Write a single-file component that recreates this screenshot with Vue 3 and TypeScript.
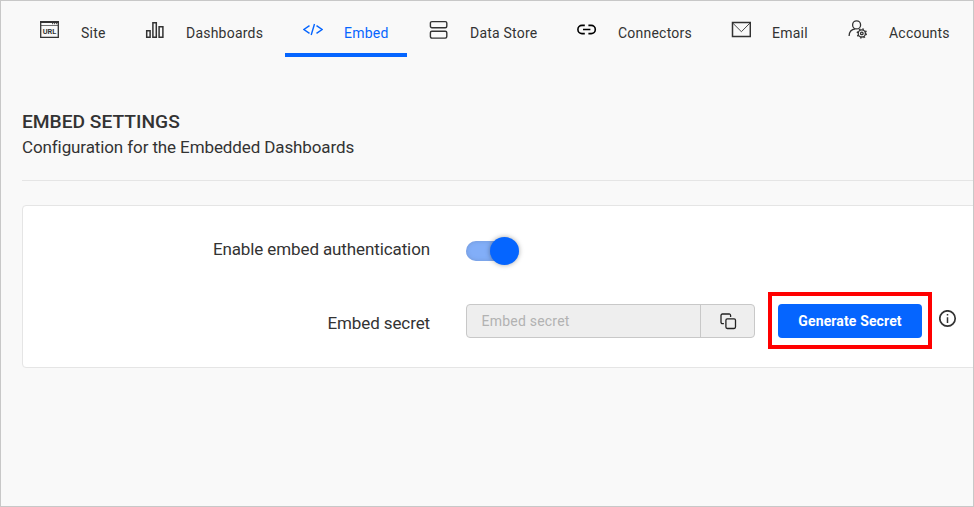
<script setup lang="ts">
import { ref } from 'vue'

interface Tab {
  id: string
  label: string
}

const tabs: Tab[] = [
  { id: 'site', label: 'Site' },
  { id: 'dashboards', label: 'Dashboards' },
  { id: 'embed', label: 'Embed' },
  { id: 'store', label: 'Data Store' },
  { id: 'connectors', label: 'Connectors' },
  { id: 'email', label: 'Email' },
  { id: 'accounts', label: 'Accounts' },
]

const active = ref<string>('embed')
const enabled = ref<boolean>(true)
</script>

<template>
  <div class="page">
    <nav class="tabs">
      <a
        v-for="tab in tabs"
        :key="tab.id"
        class="tab"
        :class="{ active: tab.id === active }"
        @click="active = tab.id"
      >
        <svg class="icon" viewBox="0 0 20 20" fill="none" stroke="currentColor">
          <g v-if="tab.id === 'site'">
            <path d="M.7 2v15.4h17.6V2" stroke-width="1.3" />
            <path d="M0 2h19" stroke-width="2" />
            <path d="M1 5.5h17" stroke-width=".7" />
            <path d="M12 3.7h1.2m.8 0h1.2m.8 0h1.2" stroke-width="1" />
            <text x="9.5" y="14" class="url">URL</text>
          </g>
          <g v-else-if="tab.id === 'dashboards'" stroke-width="1.5">
            <path d="M1.7 10.7h3.4v6.6H1.7zM7.9 2.7h3.4v14.6H7.9zM14.1 6.7h3.8v10.6h-3.8z" />
          </g>
          <g v-else-if="tab.id === 'embed'" stroke-width="1.4">
            <path d="M6.5 5.7.9 9.5l5.6 3.8M13.5 5.7l5.6 3.8-5.6 3.8M11.5 4 8.2 15" />
          </g>
          <g v-else-if="tab.id === 'store'" stroke-width="1.4">
            <rect x="1.4" y="1.6" width="16.4" height="6.2" rx="1.5" />
            <rect x="1.4" y="11.3" width="16.4" height="6.8" rx="1.5" />
          </g>
          <g v-else-if="tab.id === 'connectors'" class="link" stroke-width="1.6">
            <path d="M7.8 5.4H5a4.1 4.1 0 0 0 0 8.2h2.8M11.4 5.4h2.8a4.1 4.1 0 0 1 0 8.2h-2.8M6 9.5h7.4" />
          </g>
          <g v-else-if="tab.id === 'email'">
            <path d="M1.5 2.6h17.8v13.8H1.5z" stroke-width="1.5" />
            <path d="m1.7 3 8.7 8.7L19 3" stroke-width=".9" />
          </g>
          <g v-else>
            <circle cx="8.6" cy="4.9" r="4" stroke-width="1.3" />
            <path d="M1.1 15.9c.1-3.8 2.3-6.5 6.2-7" stroke-width="1.3" />
            <circle cx="13.8" cy="13.4" r="3.6" stroke-width="1.3" />
            <circle cx="13.8" cy="13.4" r="1.3" stroke-width="1.3" />
            <circle cx="13.8" cy="13.4" r="4.5" stroke-width="1.4" stroke-dasharray="1.6 1.934" />
          </g>
        </svg>
        <span>{{ tab.label }}</span>
      </a>
    </nav>

    <header class="heading">
      <h1>EMBED SETTINGS</h1>
      <p>Configuration for the Embedded Dashboards</p>
    </header>

    <section class="card">
      <div class="row">
        <label class="enable-label">Enable embed authentication</label>
        <button class="toggle" :class="{ on: enabled }" aria-label="Enable embed authentication" @click="enabled = !enabled">
          <span class="knob"></span>
        </button>
      </div>
      <div class="row secret">
        <label class="secret-label">Embed secret</label>
        <div class="group">
          <input type="text" placeholder="Embed secret" disabled />
          <button class="copy" aria-label="Copy">
            <svg viewBox="0 0 18 18" fill="none" stroke="currentColor" stroke-width="1.3">
              <rect x="6.9" y="6.9" width="9.6" height="9.6" rx="1.4" />
              <path d="M4.9 11.6H3.4A1.4 1.4 0 0 1 2 10.2V3.4A1.4 1.4 0 0 1 3.4 2h6.8a1.4 1.4 0 0 1 1.4 1.4v1.5" />
            </svg>
          </button>
        </div>
        <div class="highlight">
          <button class="generate">Generate Secret</button>
        </div>
        <svg class="info" viewBox="0 0 18 18" fill="none" stroke="currentColor">
          <circle cx="8.5" cy="8.5" r="7.7" stroke-width="1.7" />
          <path d="M8.5 7.2v5.8M8.5 4v1.6" stroke-width="1.5" />
        </svg>
      </div>
    </section>
  </div>
</template>

<style>
body {
  margin: 0;
}
</style>

<style scoped>
.page {
  box-sizing: border-box;
  width: 974px;
  height: 507px;
  border: 1px solid #c8c8c8;
  background: #f9f9f9;
  color: #333;
  font-family: Roboto, sans-serif;
  overflow: hidden;
}
.tabs {
  display: grid;
  grid-template-columns: 101px 154px 122px 144px 150px 113px 139px;
  column-gap: 4px;
  height: 56px;
  padding-left: 21px;
}
.tab {
  box-sizing: border-box;
  display: flex;
  align-items: flex-start;
  padding: 19px 0 0 18px;
  font-size: 14px;
  line-height: 16px;
  letter-spacing: 0.22px;
  white-space: nowrap;
  cursor: pointer;
}
.tab.active {
  color: #0565ff;
  border-bottom: 4px solid #0565ff;
}
.tab span {
  margin: 5px 0 0 21px;
}
.icon {
  flex: none;
  width: 20px;
  height: 20px;
}
.url {
  font-size: 7.4px;
  font-weight: 700;
  letter-spacing: 0;
  text-anchor: middle;
  fill: currentColor;
  stroke: none;
}
.link {
  stroke: #000;
}
.heading {
  margin-left: 21px;
  padding-top: 53px;
  height: 70px;
  border-bottom: 1px solid #e5e5e5;
}
h1 {
  margin: 0;
  font-size: 19.2px;
  line-height: 24px;
  font-weight: 500;
}
p {
  margin: 1px 0 0;
  font-size: 17px;
  line-height: 24px;
  letter-spacing: -0.11px;
}
.card {
  box-sizing: border-box;
  width: 970px;
  height: 163px;
  margin: 24px 0 0 21px;
  padding-top: 28px;
  border: 1px solid #e5e5e5;
  border-radius: 4px;
  background: #fff;
}
.row {
  display: flex;
  align-items: flex-start;
}
label {
  width: 407px;
  margin-right: 36px;
  font-size: 17px;
  line-height: 24px;
  letter-spacing: -0.11px;
  text-align: right;
}
.enable-label {
  padding-top: 3px;
}
button {
  padding: 0;
  border: 0;
  font-family: inherit;
}
.toggle {
  display: flex;
  align-items: center;
  width: 50px;
  height: 20px;
  margin-top: 7px;
  border-radius: 10px;
  background: #bbb;
}
.toggle.on {
  background: #82aef8;
  box-shadow: inset 0 0 4px rgba(90, 110, 150, 0.35);
}
.knob {
  flex: none;
  width: 29px;
  height: 28px;
  border-radius: 50%;
  background: #888;
}
.on .knob {
  margin-left: 24px;
  background: #0565ff;
  box-shadow: 0 0 5px rgba(0, 0, 0, 0.35);
}
.secret {
  margin-top: 31px;
}
.secret-label {
  padding-top: 19px;
}
.group {
  box-sizing: border-box;
  display: flex;
  width: 289px;
  height: 34px;
  margin-top: 12px;
  border: 1px solid #c8c8c8;
  border-radius: 4px;
  background: #eee;
  overflow: hidden;
}
input {
  box-sizing: border-box;
  width: 233px;
  padding: 0 0 0 14.5px;
  border: 0;
  background: transparent;
  font: 14px Roboto, sans-serif;
  letter-spacing: 0.22px;
}
input::placeholder {
  color: #b2b2b2;
}
.copy {
  display: flex;
  flex: 1;
  align-items: center;
  justify-content: center;
  border-left: 1px solid #c8c8c8;
  background: transparent;
  color: #222;
}
.copy svg {
  width: 18px;
  height: 18px;
}
.highlight {
  box-sizing: border-box;
  width: 164px;
  height: 57px;
  margin-left: 13px;
  padding: 8px 6px;
  border: 4px solid #f00;
}
.generate {
  width: 144px;
  height: 34px;
  border-radius: 4px;
  background: #0565ff;
  color: #fff;
  font-size: 14px;
  font-weight: 700;
  letter-spacing: 0.13px;
}
.info {
  width: 18px;
  height: 18px;
  margin: 18px 0 0 7px;
}
</style>
